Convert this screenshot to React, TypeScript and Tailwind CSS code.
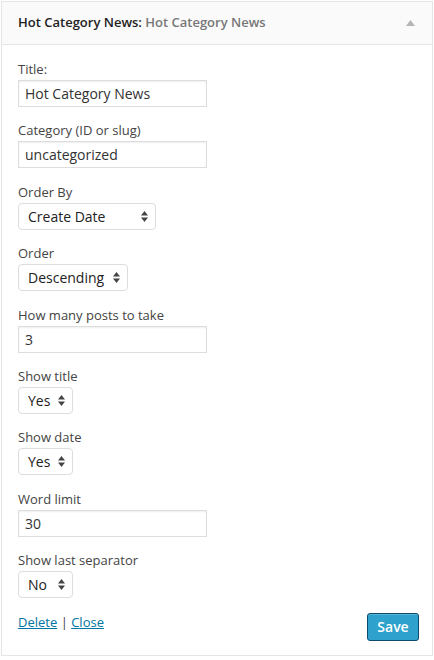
import type { ReactNode } from 'react';

const font = { fontFamily: '"Open Sans", "Noto Sans", sans-serif' };

function Label({ children }: { children: ReactNode }) {
  return <label className="block text-[13px] leading-[18px] text-[#444]">{children}</label>;
}

function TextField({ label, value }: { label: string; value: string }) {
  return (
    <div className="mb-[14.4px]">
      <Label>{label}</Label>
      <input
        type="text"
        defaultValue={value}
        className="mt-[2px] block h-[27px] w-[189px] border border-[#ddd] bg-white px-[6px] text-[14px] text-[#333] shadow-[inset_0_1px_2px_rgba(0,0,0,0.07)] outline-none"
        style={font}
      />
    </div>
  );
}

function Arrows() {
  return (
    <svg width="7" height="11" viewBox="0 0 7 11" className="pointer-events-none absolute top-[8px] right-[8px]">
      <path d="M3.5 0 L7 4.5 L0 4.5 Z" fill="#444" />
      <path d="M0 6.5 L7 6.5 L3.5 11 Z" fill="#444" />
    </svg>
  );
}

function SelectField({ label, value, options, width }: { label: string; value: string; options: string[]; width: string }) {
  return (
    <div className="mb-[14.4px]">
      <Label>{label}</Label>
      <div className={`relative mt-[2px] h-[27px] ${width}`}>
        <select
          defaultValue={value}
          className="block h-[27px] w-full appearance-none rounded-[4px] border border-[#ddd] bg-white pl-[9px] text-[14px] text-[#222] outline-none"
          style={font}
        >
          {options.map((o) => (
            <option key={o}>{o}</option>
          ))}
        </select>
        <Arrows />
      </div>
    </div>
  );
}

export default function App() {
  return (
    <div className="bg-white pt-px pl-px" style={font}>
      <div className="w-[432px] border border-[#e5e5e5] bg-white shadow-[0_1px_1px_rgba(0,0,0,0.04)]">
        <div className="flex h-[43px] items-center justify-between border-b border-[#e5e5e5] bg-[#fafafa] pl-4 pr-[17px]">
          <h4 className="text-[13px] font-semibold text-[#222]">
            Hot Category News: <span className="text-[#777]">Hot Category News</span>
          </h4>
          <svg width="9" height="6" viewBox="0 0 9 6">
            <path d="M4.5 0 L9 6 L0 6 Z" fill="#b4b4b4" />
          </svg>
        </div>

        <div className="pt-[15px] pr-[13px] pb-[14px] pl-4">
          <TextField label="Title:" value="Hot Category News" />
          <TextField label="Category (ID or slug)" value="uncategorized" />
          <SelectField label="Order By" value="Create Date" options={['Create Date', 'Title', 'Random']} width="w-[138px]" />
          <SelectField label="Order" value="Descending" options={['Descending', 'Ascending']} width="w-[110px]" />
          <TextField label="How many posts to take" value="3" />
          <SelectField label="Show title" value="Yes" options={['Yes', 'No']} width="w-[55px]" />
          <SelectField label="Show date" value="Yes" options={['Yes', 'No']} width="w-[55px]" />
          <TextField label="Word limit" value="30" />
          <SelectField label="Show last separator" value="No" options={['Yes', 'No']} width="w-[55px]" />

          <div className="mt-[2px] flex items-start justify-between">
            <div className="text-[13px] leading-[18px] text-[#444]">
              <a href="#" className="text-[#0074a2] underline">Delete</a>
              {' | '}
              <a href="#" className="text-[#0074a2] underline">Close</a>
            </div>
            <button
              type="button"
              className="h-[28px] w-[52px] rounded-[3px] border border-[#0e4a6b] bg-[#2ea2cc] text-[14px] font-semibold text-white shadow-[inset_0_1px_0_rgba(120,200,230,0.5)]"
              style={font}
            >
              Save
            </button>
          </div>
        </div>
      </div>
    </div>
  );
}
